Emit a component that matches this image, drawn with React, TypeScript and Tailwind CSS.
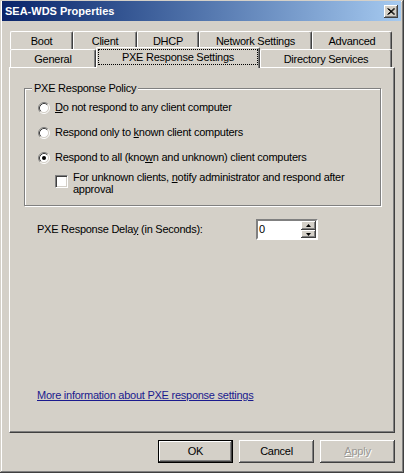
import React from 'react';

const raised =
  'bg-[#d4d0c8] shadow-[inset_-1px_-1px_#404040,inset_1px_1px_#fff,inset_-2px_-2px_#808080,inset_2px_2px_#d4d0c8]';
const sunken =
  'border border-t-[#808080] border-l-[#808080] border-b-white border-r-white shadow-[inset_1px_1px_#404040,inset_-1px_-1px_#d4d0c8]';

function Radio({ checked }: { checked?: boolean }) {
  return (
    <svg width="12" height="12" viewBox="0 0 12 12" className="shrink-0">
      <circle cx="6" cy="6" r="4.5" fill="#fff" />
      <path d="M2.11 9.89 A5.5 5.5 0 0 1 9.89 2.11" fill="none" stroke="#808080" />
      <path d="M9.89 2.11 A5.5 5.5 0 0 1 2.11 9.89" fill="none" stroke="#fff" />
      <path d="M2.82 9.18 A4.5 4.5 0 0 1 9.18 2.82" fill="none" stroke="#404040" />
      <path d="M9.18 2.82 A4.5 4.5 0 0 1 2.82 9.18" fill="none" stroke="#d4d0c8" />
      {checked && <circle cx="6" cy="6" r="2" fill="#000" />}
    </svg>
  );
}

function Tab({ label, w, active }: { label: string; w: string; active?: boolean }) {
  if (active) {
    return (
      <div
        className={`${w} h-[21px] -mb-[1px] relative z-10 flex bg-[#d4d0c8] border-t border-l border-white border-r border-r-[#404040] rounded-tl-[2px] rounded-tr-[2px] shadow-[inset_-1px_0_#808080]`}
      >
        <div className="flex-1 mx-[1px] mt-[1px] mb-[3px] border border-dotted border-black flex items-center justify-center">
          {label}
        </div>
      </div>
    );
  }
  return (
    <div
      className={`${w} h-[18px] flex items-center justify-center pt-[1px] bg-[#d4d0c8] border-t border-l border-white border-r border-r-[#404040] rounded-tl-[2px] rounded-tr-[2px] shadow-[inset_-1px_0_#808080]`}
    >
      {label}
    </div>
  );
}

function Button({ children, def, disabled }: { children: React.ReactNode; def?: boolean; disabled?: boolean }) {
  return (
    <div
      className={`w-[75px] h-[23px] flex items-center justify-center ${raised} ${def ? 'border border-black' : ''} ${
        disabled ? 'text-[#9a9894] [text-shadow:1px_1px_0_#fff]' : ''
      }`}
    >
      {children}
    </div>
  );
}

export default function App() {
  return (
    <div className="w-[404px] h-[473px] bg-[#d4d0c8] flex flex-col text-[11px] leading-[13px] tracking-[-0.25px] text-black font-['Liberation_Sans',Arial,sans-serif] shadow-[inset_-1px_-1px_#404040,inset_1px_1px_#d4d0c8,inset_-2px_-2px_#808080,inset_2px_2px_#fff]">
      {/* Title bar */}
      <div className="ml-[2px] mr-[3px] mt-[1px] h-[20px] bg-gradient-to-r from-[#0a246a] to-[#a6caf0] flex items-center pl-[3px] pr-[3px]">
        <span className="text-white font-bold text-[11px] tracking-normal">SEA-WDS Properties</span>
        <div className={`ml-auto w-[14px] h-[13px] flex items-center justify-center ${raised}`}>
          <svg width="8" height="7" viewBox="0 0 8 7">
            <path d="M0.5 0.5 L7 6.5 M1.5 0.5 L8 6.5 M7 0.5 L0.5 6.5 M8 0.5 L1.5 6.5" stroke="#000" strokeWidth="1" />
          </svg>
        </div>
      </div>

      {/* Tabs */}
      <div className="mt-[10px] ml-[10px] flex flex-col">
        <div className="flex h-[18px]">
          <Tab label="Boot" w="w-[63px]" />
          <Tab label="Client" w="w-[64px]" />
          <Tab label="DHCP" w="w-[62px]" />
          <Tab label="Network Settings" w="w-[113px]" />
          <Tab label="Advanced" w="w-[80px]" />
        </div>
        <div className="flex h-[18px] items-end">
          <Tab label="General" w="w-[86px]" />
          <Tab label="PXE Response Settings" w="w-[164px]" active />
          <Tab label="Directory Services" w="w-[132px]" />
        </div>
      </div>

      {/* Panel */}
      <div className="ml-[9px] w-[386px] h-[366px] flex flex-col border-t border-l border-white border-r border-b border-r-[#404040] border-b-[#404040] shadow-[inset_-1px_-1px_#808080]">
        <div className="ml-[14px] mt-[20px] w-[357px] h-[118px] flex flex-col border border-[#808080] shadow-[inset_1px_1px_#fff,1px_1px_#fff]">
          <span className="self-start ml-[7px] -mt-[7px] h-[13px] px-[2px] bg-[#d4d0c8]">PXE Response Policy</span>
          <div className="flex flex-col pl-[13px]">
            <div className="h-[25px] flex items-center gap-[5px]">
              <Radio />
              <span>
                <u>D</u>o not respond to any client computer
              </span>
            </div>
            <div className="h-[25px] flex items-center gap-[5px]">
              <Radio />
              <span>
                Respond only to <u>k</u>nown client computers
              </span>
            </div>
            <div className="h-[25px] flex items-center gap-[5px]">
              <Radio checked />
              <span>
                Respond to all (kno<u>w</u>n and unknown) client computers
              </span>
            </div>
            <div className="mt-[1px] ml-[17px] flex items-start gap-[5px]">
              <div className={`mt-[4px] w-[13px] h-[13px] shrink-0 bg-white ${sunken}`} />
              <p className="leading-[12px] w-[285px]">
                For unknown clients, <u>n</u>otify administrator and respond after approval
              </p>
            </div>
          </div>
        </div>

        {/* Delay */}
        <div className="mt-[13px] h-[21px] flex items-center">
          <span className="ml-[27px] w-[219px]">
            PXE Response Dela<u>y</u> (in Seconds):
          </span>
          <div className="w-[62px] h-[21px] flex bg-white border-[2px] border-t-[#808080] border-l-[#808080] border-b-white border-r-white">
            <div className="flex-1 flex items-center pl-[1px]">0</div>
            <div className="w-[15px] flex flex-col">
              <div className={`h-[9px] flex items-center justify-center ${raised}`}>
                <svg width="5" height="3" viewBox="0 0 5 3">
                  <path d="M2.5 0 L5 3 L0 3 Z" fill="#000" />
                </svg>
              </div>
              <div className={`flex-1 flex items-center justify-center ${raised}`}>
                <svg width="5" height="3" viewBox="0 0 5 3">
                  <path d="M0 0 L5 0 L2.5 3 Z" fill="#000" />
                </svg>
              </div>
            </div>
          </div>
        </div>

        {/* Link */}
        <div className="mt-[149px] ml-[27px]">
          <span className="text-[#1a1a8e] underline">More information about PXE response settings</span>
        </div>
      </div>

      {/* Buttons */}
      <div className="mt-[7px] flex justify-end gap-[6px] pr-[9px]">
        <Button def>OK</Button>
        <Button>Cancel</Button>
        <Button disabled>
          <span>
            <u>A</u>pply
          </span>
        </Button>
      </div>
    </div>
  );
}
